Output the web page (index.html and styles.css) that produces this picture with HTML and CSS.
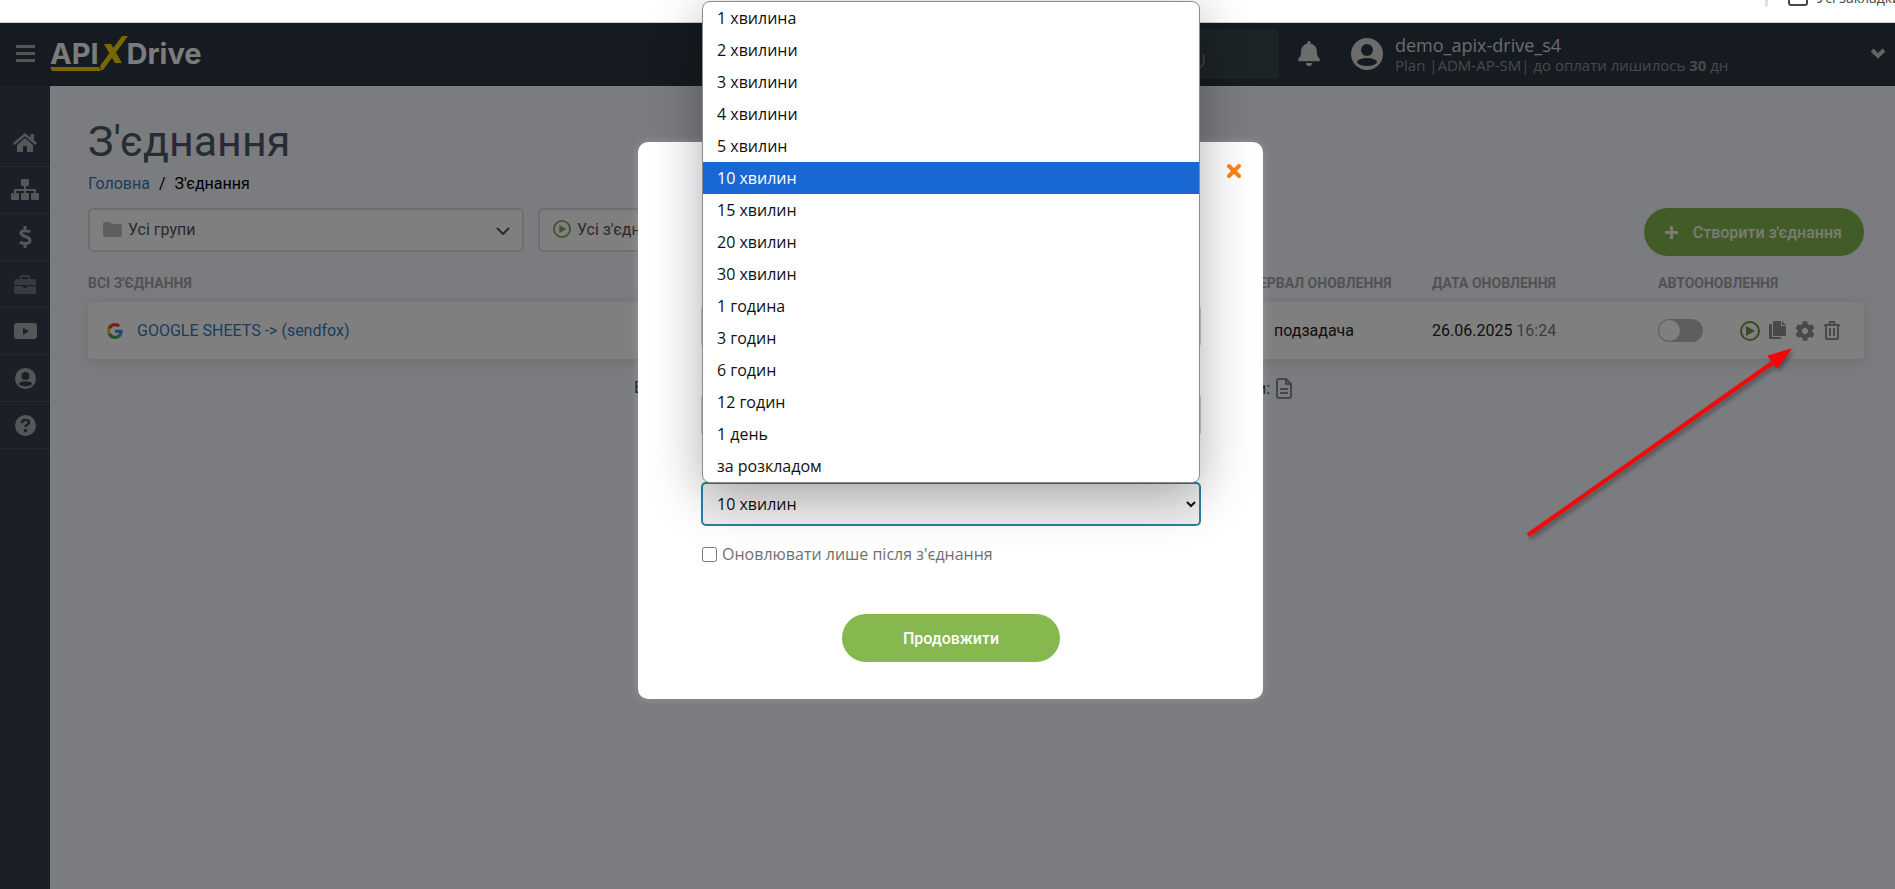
FILE: index.html
```
<!DOCTYPE html>
<html lang="uk">
<head>
    <meta charset="UTF-8">
    <meta name="viewport" content="width=device-width, initial-scale=1.0">
    <title>З'єднання - ApiX-Drive</title>
    <link rel="stylesheet" href="styles.css">
</head>
<body>
    <div class="bookmarks">
        <span class="bookmarks-divider"></span>
        <a href="#" class="bookmarks-link">
            <svg width="20" height="18" viewBox="0 0 20 18"><rect x="1" y="1" width="18" height="16" rx="2" fill="none" stroke="#474747" stroke-width="2"/></svg>
            <span>Усі закладки</span>
        </a>
    </div>

    <div class="app">
        <header class="header">
            <button class="menu-btn" aria-label="Меню">
                <svg width="19" height="17" viewBox="0 0 19 17" fill="currentColor"><rect width="19" height="3"/><rect y="7" width="19" height="3"/><rect y="14" width="19" height="3"/></svg>
            </button>
            <a href="#" class="logo">
                <span class="logo-api">API</span>
                <svg class="logo-mark" width="80" height="38" viewBox="0 0 80 38" fill="#f5cf00"><path d="M1 32h49l2 4H3z"/><path d="M55 9h7l11 19h-7z"/><path d="M73 1h6L54 35h-2l-1-4z"/></svg>
                <span class="logo-drive">Drive</span>
            </a>
            <div class="balance"><i>(15%)</i></div>
            <button class="bell" aria-label="Сповіщення">
                <svg width="22" height="25" viewBox="0 0 448 512" preserveAspectRatio="none" fill="currentColor"><path d="M224 512c35.320 0 63.970-28.650 63.970-64H160.030c0 35.350 28.650 64 63.970 64zm215.390-149.710c-19.320-20.760-55.470-51.990-55.470-154.290 0-77.700-54.480-139.900-127.940-155.160V32c0-17.670-14.320-32-31.980-32s-31.980 14.330-31.980 32v20.840C118.560 68.100 64.080 130.300 64.080 208c0 102.300-36.150 133.530-55.470 154.290-6 6.450-8.660 14.160-8.610 21.710.11 16.400 12.980 32 32.100 32h383.800c19.120 0 32-15.600 32.100-32 .05-7.550-2.610-15.270-8.610-21.710z"/></svg>
            </button>
            <div class="user">
                <svg class="user-avatar" width="32" height="32" viewBox="0 0 32 32"><circle cx="16" cy="16" r="16" fill="currentColor"/><circle cx="16" cy="12" r="6" fill="#2d3642"/><ellipse cx="16" cy="24" rx="10" ry="4" fill="#2d3642"/></svg>
                <div class="user-info">
                    <div class="user-name">demo_apix-drive_s4</div>
                    <div class="user-plan">Plan |ADM-AP-SM| до оплати лишилось <b>30</b> дн</div>
                </div>
            </div>
            <button class="user-toggle" aria-label="Профіль">
                <svg width="16" height="11" viewBox="0 0 16 11"><path d="M2 2l6 6 6-6" fill="none" stroke="currentColor" stroke-width="4"/></svg>
            </button>
        </header>

        <div class="body">
            <nav class="sidebar">
                <a href="#" aria-label="Головна">
                    <svg width="24" height="20" viewBox="0 0 24 20" fill="currentColor"><path d="M12 0L0 10l1.500 2L12 3.200 22.500 12l1.500-2-3-2.500V1h-3.500v3.500z"/><path d="M12 5l-8 7v7h6v-6h4v6h6v-7z"/></svg>
                </a>
                <a href="#" aria-label="З'єднання">
                    <svg width="28" height="22" viewBox="0 0 28 22" fill="currentColor"><rect x="10" y="0" width="8" height="7" rx="1"/><path d="M13 7h2v3h10v4h-2v-2h-8v2h-2v-2H5v2H3v-4h10z"/><rect x="0" y="14" width="8" height="7" rx="1"/><rect x="10" y="14" width="8" height="7" rx="1"/><rect x="20" y="14" width="8" height="7" rx="1"/></svg>
                </a>
                <a href="#" aria-label="Оплата">
                    <svg width="14" height="22" viewBox="0 0 14 22" fill="none" stroke="currentColor" stroke-width="3"><path d="M12 6C10 4.500 3 3.500 3 7c0 4 9 3 9 7.500 0 4-7.500 3.500-10 1.500M7 0v4M7 18v4"/></svg>
                </a>
                <a href="#" class="dimmed" aria-label="Бізнес">
                    <svg width="22" height="19" viewBox="0 0 22 19" fill="currentColor"><path fill-rule="evenodd" d="M6 4V2q0-2 2-2h6q2 0 2 2v2h4q2 0 2 2v4H0V6q0-2 2-2zM8 4h6V2H8z"/><path d="M0 11h9v2h4v-2h9v6q0 2-2 2H2q-2 0-2-2z"/></svg>
                </a>
                <a href="#" aria-label="Відео">
                    <svg width="23" height="16" viewBox="0 0 23 16" fill="currentColor"><path fill-rule="evenodd" d="M3 0h17q3 0 3 3v10q0 3-3 3H3q-3 0-3-3V3q0-3 3-3zM9 5v7l6-4z"/></svg>
                </a>
                <a href="#" aria-label="Профіль">
                    <svg width="21" height="21" viewBox="0 0 32 32"><circle cx="16" cy="16" r="16" fill="currentColor"/><circle cx="16" cy="12" r="6" fill="#374050"/><ellipse cx="16" cy="24" rx="10" ry="4" fill="#374050"/></svg>
                </a>
                <a href="#" aria-label="Допомога">
                    <svg width="21" height="21" viewBox="0 0 21 21"><circle cx="10.500" cy="10.500" r="10.500" fill="currentColor"/><path d="M7 8q0-3 3.500-3T14 7.500c0 2.500-3.500 2-3.500 4.500" fill="none" stroke="#374050" stroke-width="2.500"/><circle cx="10.500" cy="15.500" r="1.800" fill="#374050"/></svg>
                </a>
            </nav>

            <main class="content">
                <h1>З'єднання</h1>
                <div class="breadcrumbs"><a href="#">Головна</a><span>/</span><span>З'єднання</span></div>

                <div class="toolbar">
                    <button class="filter">
                        <svg width="19" height="15" viewBox="0 0 19 15" fill="#bcbcbc"><path d="M0 2q0-2 2-2h5l2 2h8q2 0 2 2v9q0 2-2 2H2q-2 0-2-2z"/></svg>
                        <span>Усі групи</span>
                        <svg class="filter-arrow" width="14" height="8" viewBox="0 0 14 8"><path d="M1 1l6 6 6-6" fill="none" stroke="#555" stroke-width="2"/></svg>
                    </button>
                    <button class="filter">
                        <svg width="18" height="18" viewBox="0 0 20 20"><circle cx="10" cy="10" r="9" fill="none" stroke="#87a758" stroke-width="2"/><path d="M7 5.500v9l8-4.500z" fill="#87a758"/></svg>
                        <span>Усі з'єднання</span>
                        <svg class="filter-arrow" width="14" height="8" viewBox="0 0 14 8"><path d="M1 1l6 6 6-6" fill="none" stroke="#555" stroke-width="2"/></svg>
                    </button>
                    <button class="create-btn">
                        <svg width="13" height="13" viewBox="0 0 13 13" fill="currentColor"><path d="M5 0h3v5h5v3H8v5H5V8H0V5h5z"/></svg>
                        <span>Створити з'єднання</span>
                    </button>
                </div>

                <table class="connections">
                    <thead>
                        <tr>
                            <th>ВСІ З'ЄДНАННЯ</th>
                            <th class="col-interval">ІНТЕРВАЛ ОНОВЛЕННЯ</th>
                            <th class="col-date">ДАТА ОНОВЛЕННЯ</th>
                            <th class="col-auto">АВТООНОВЛЕННЯ</th>
                            <th class="col-actions"></th>
                        </tr>
                    </thead>
                    <tbody>
                        <tr>
                            <td>
                                <div class="connection">
                                    <svg width="16" height="16" viewBox="0 0 48 48"><path fill="#ea4335" d="M24 9.500c3.500 0 6.700 1.200 9.200 3.600l6.900-6.900C35.900 2.400 30.500 0 24 0 14.600 0 6.500 5.400 2.600 13.200l8 6.200C12.400 13.700 17.700 9.500 24 9.500z"/><path fill="#4285f4" d="M47 24.600c0-1.600-.2-3.100-.4-4.600H24v9h12.900c-.6 3-2.200 5.500-4.700 7.200l7.700 6C44.400 38 47 32 47 24.600z"/><path fill="#fbbc05" d="M10.500 28.600A14.500 14.500 0 0 1 10.500 19.400l-8-6.200a24 24 0 0 0 0 21.600z"/><path fill="#34a853" d="M24 48c6.500 0 11.900-2.100 15.900-5.800l-7.700-6c-2.200 1.400-4.900 2.300-8.200 2.300-6.300 0-11.600-4.200-13.500-9.900l-8 6.200C6.500 42.600 14.600 48 24 48z"/></svg>
                                    <a href="#">GOOGLE SHEETS -&gt; (sendfox)</a>
                                </div>
                            </td>
                            <td class="col-interval">подзадача</td>
                            <td class="col-date">26.06.2025 <span class="time">16:24</span></td>
                            <td class="col-auto"><input type="checkbox" class="switch" aria-label="Автооновлення"></td>
                            <td class="col-actions">
                                <div class="actions">
                                    <button aria-label="Запустити"><svg width="20" height="20" viewBox="0 0 20 20"><circle cx="10" cy="10" r="9" fill="none" stroke="#6f9838" stroke-width="2"/><path d="M6 5v10l9-5z" fill="#6f9838"/></svg></button>
                                    <button aria-label="Копіювати"><svg width="17" height="19" viewBox="0 0 17 19" fill="currentColor"><path d="M5 0h7v5h5v9q0 1-1 1H5q-1 0-1-1V1q0-1 1-1z"/><path d="M13 0l4 4h-4z"/><path d="M0 4q0-1 1-1h2v12q0 1 1 1h8v1q0 1-1 1H1q-1 0-1-1z"/></svg></button>
                                    <button aria-label="Налаштування"><svg width="20" height="20" viewBox="0 0 512 512" fill="currentColor"><path d="M487.400 315.700l-42.600-24.600c4.300-23.200 4.300-47 0-70.200l42.600-24.600c4.900-2.800 7.100-8.600 5.500-14-11.100-35.600-30-67.800-54.700-94.600-3.800-4.100-10-5.100-14.800-2.300L380.800 110c-17.900-15.400-38.500-27.300-60.800-35.100V25.800c0-5.600-3.900-10.500-9.400-11.700-36.700-8.200-74.300-7.800-109.200 0-5.500 1.200-9.400 6.100-9.400 11.700V75c-22.200 7.900-42.800 19.800-60.800 35.100L88.700 85.500c-4.900-2.800-11-1.900-14.800 2.300-24.700 26.700-43.600 58.900-54.700 94.600-1.700 5.400.6 11.200 5.500 14L67.300 221c-4.300 23.200-4.300 47 0 70.200l-42.600 24.600c-4.900 2.800-7.100 8.600-5.500 14 11.100 35.600 30 67.800 54.700 94.600 3.800 4.100 10 5.100 14.800 2.300l42.600-24.600c17.900 15.400 38.500 27.300 60.800 35.100v49.200c0 5.600 3.900 10.500 9.400 11.700 36.700 8.200 74.300 7.800 109.200 0 5.500-1.200 9.400-6.100 9.400-11.700v-49.200c22.200-7.900 42.800-19.800 60.800-35.100l42.600 24.600c4.900 2.800 11 1.900 14.800-2.300 24.700-26.700 43.600-58.900 54.700-94.600 1.500-5.500-.7-11.300-5.600-14.100zM256 336c-44.100 0-80-35.900-80-80s35.900-80 80-80 80 35.900 80 80-35.900 80-80 80z"/></svg></button>
                                    <button aria-label="Видалити"><svg width="16" height="19" viewBox="0 0 16 19" fill="none" stroke="currentColor" stroke-width="2"><path d="M0 4h16M5 4l1-3h4l1 3M2 4v13q0 1 1 1h10q1 0 1-1V4"/><path d="M6 7v8M10 7v8"/></svg></button>
                                </div>
                            </td>
                        </tr>
                    </tbody>
                </table>

                <div class="summary">
                    <span>Всього з'єднань: 1</span>
                    <span class="logs">Логи:
                        <svg width="16" height="21" viewBox="0 0 16 21" fill="none" stroke="#8c8c8c" stroke-width="2"><path d="M3 1h7l5 5v12q0 2-2 2H3q-2 0-2-2V3q0-2 2-2zM10 1v5h5M4 11h8M4 15h8"/></svg>
                    </span>
                </div>
            </main>
        </div>

        <div class="overlay">
            <form class="modal">
                <button type="button" class="modal-close" aria-label="Закрити">
                    <svg width="18" height="18" viewBox="0 0 18 18"><path d="M4 4l10 10M14 4L4 14" stroke="#f9850d" stroke-width="4" stroke-linecap="round"/></svg>
                </button>
                <h2>Налаштування</h2>
                <div class="field">
                    <label for="name">Назва</label>
                    <input type="text" id="name">
                </div>
                <div class="field">
                    <label for="group">Група</label>
                    <input type="text" id="group">
                </div>
                <div class="field">
                    <label for="interval">Інтервал</label>
                    <select id="interval">
                        <option>10 хвилин</option>
                    </select>
                    <ul class="dropdown" role="listbox">
                        <li role="option">1 хвилина</li>
                        <li role="option">2 хвилини</li>
                        <li role="option">3 хвилини</li>
                        <li role="option">4 хвилини</li>
                        <li role="option">5 хвилин</li>
                        <li role="option" class="selected" aria-selected="true">10 хвилин</li>
                        <li role="option">15 хвилин</li>
                        <li role="option">20 хвилин</li>
                        <li role="option">30 хвилин</li>
                        <li role="option">1 година</li>
                        <li role="option">3 годин</li>
                        <li role="option">6 годин</li>
                        <li role="option">12 годин</li>
                        <li role="option">1 день</li>
                        <li role="option">за розкладом</li>
                    </ul>
                </div>
                <div class="check">
                    <input type="checkbox" id="after">
                    <label for="after">Оновлювати лише після з'єднання</label>
                </div>
                <button type="button" class="submit-btn">Продовжити</button>
            </form>
        </div>
    </div>

    <!-- pointer to the settings icon -->
    <svg class="pointer" width="270" height="195" viewBox="0 0 270 195"><path d="M4 189L248 17" stroke="#f40808" stroke-width="4"/><path d="M267 3l-23 7 9 12z" fill="#f00" stroke="#f00"/></svg>
</body>
</html>
```
FILE: styles.css
```
* {
    box-sizing: border-box;
}

body {
    margin: 0;
    min-height: 100vh;
    display: flex;
    flex-direction: column;
    position: relative;
    overflow: hidden;
    font-family: Roboto, Arial, sans-serif;
    font-size: 16px;
    background: #fff;
}

button {
    padding: 0;
    border: none;
    background: none;
    color: inherit;
    font: inherit;
    cursor: pointer;
}

svg {
    display: block;
    flex-shrink: 0;
}

a {
    color: #337ab7;
    text-decoration: none;
}

/* browser bar */
.bookmarks {
    height: 23px;
    display: flex;
    justify-content: flex-end;
    gap: 20px;
    overflow: hidden;
    border-bottom: 1px solid #ccc;
}

.bookmarks-divider {
    width: 3px;
    height: 7px;
    background: #d3e3fd;
    border-radius: 0 0 2px 2px;
}

.bookmarks-link {
    display: flex;
    align-items: center;
    gap: 9px;
    height: 20px;
    margin: -13px -6px 0 0;
    color: #474747;
    font: 14px "Open Sans", sans-serif;
    white-space: nowrap;
}

.app {
    flex: 1;
    display: flex;
    flex-direction: column;
    position: relative;
}

/* header */
.header {
    height: 63px;
    display: flex;
    align-items: center;
    padding: 0 9px 2px 16px;
    background: #2d3642;
    color: #d8d8d8;
    font-family: "Open Sans", sans-serif;
}

.menu-btn {
    color: #a8abb0;
}

.logo {
    display: flex;
    align-items: center;
    margin-left: 15px;
    color: #f8f8f8;
    font: 700 29px/38px Inter, sans-serif;
}

.logo-mark {
    margin: 0 -2px 0 -50px;
}

.balance {
    width: 560px;
    height: 50px;
    margin: 0 19px 0 auto;
    padding: 20px 74px 0 0;
    border-radius: 6px;
    background: #3a494c;
    color: #8c9494;
    text-align: right;
}

.user {
    width: 519px;
    display: flex;
    align-items: center;
    gap: 12px;
    margin-left: 31px;
}

.user-avatar {
    color: #d8d8d8;
}

.user-info {
    padding-top: 3px;
}

.user-name {
    font-size: 18px;
    line-height: 20px;
}

.user-plan {
    font-size: 15px;
    line-height: 20px;
    color: #909396;
}

.user-toggle {
    color: #c8c8c8;
}

.body {
    flex: 1;
    display: flex;
}

/* sidebar */
.sidebar {
    width: 50px;
    padding-top: 34px;
    background: #374050;
}

.sidebar a {
    height: 47px;
    display: flex;
    align-items: center;
    justify-content: center;
    border-bottom: 1px solid #4b5463;
    color: #a9acb1;
}

.sidebar .dimmed {
    color: #6f757e;
}

/* content */
.content {
    flex: 1;
    padding: 29px 31px 0 38px;
    background: #f7f8fe;
}

h1 {
    margin: 0;
    color: #4b5a66;
    font-size: 43px;
    font-weight: 400;
    line-height: 52px;
}

.breadcrumbs {
    display: flex;
    gap: 9px;
    margin-top: 7px;
    line-height: 20px;
}

.toolbar {
    display: flex;
    gap: 14px;
    margin-top: 14px;
}

.filter {
    width: 436px;
    height: 44px;
    display: flex;
    align-items: center;
    gap: 6px;
    padding: 0 12px 2px 13px;
    border: 2px solid #dcdcdc;
    border-radius: 5px;
    background: #fff;
    color: #555;
}

.filter-arrow {
    margin: 4px 0 0 auto;
}

.create-btn {
    height: 48px;
    display: flex;
    align-items: center;
    gap: 15px;
    margin-left: auto;
    padding: 0 22px 0 21px;
    border-radius: 24px;
    background: #84b84f;
    color: #f4f6e8;
    font-weight: 500;
}

.connections {
    width: 100%;
    margin-top: 10px;
    border-collapse: separate;
    border-spacing: 0;
    table-layout: fixed;
}

.connections th {
    height: 36px;
    padding: 0 0 2px;
    color: #a4a4a4;
    font-size: 14px;
    text-align: left;
}

.connections td {
    height: 57px;
    padding: 0;
    background: #fff;
    color: #222;
}

.connections tbody tr {
    border-radius: 5px;
    box-shadow: 0 2px 14px rgba(60, 60, 80, 0.15);
}

.connections td:first-child {
    border-radius: 5px 0 0 5px;
}

.connections td:last-child {
    border-radius: 0 5px 5px 0;
}

.connections .col-interval {
    width: 236px;
    text-align: center;
}

.col-date {
    width: 226px;
}

.col-auto {
    width: 82px;
    white-space: nowrap;
}

.col-actions {
    width: 124px;
}

.time {
    color: #7a7a7a;
}

.connection {
    display: flex;
    align-items: center;
    gap: 14px;
    padding-left: 19px;
}

.switch {
    appearance: none;
    display: block;
    width: 45px;
    height: 23px;
    margin: 0;
    padding: 1px;
    border-radius: 12px;
    background: #bcbcbc;
}

.switch::before {
    content: "";
    display: block;
    width: 21px;
    height: 21px;
    border-radius: 50%;
    background: #fff;
}

.actions {
    display: flex;
    align-items: center;
    gap: 9px;
    color: #929292;
}

.summary {
    width: 684px;
    display: flex;
    justify-content: space-between;
    margin: 19px auto 0;
    padding-right: 26px;
    color: #333;
}

.logs {
    display: flex;
    align-items: center;
    gap: 6px;
}

/* modal */
.overlay {
    position: absolute;
    inset: 0;
    display: flex;
    justify-content: center;
    align-items: flex-start;
    padding: 119px 0 0 6px;
    background: rgba(0, 0, 0, 0.5);
    font-family: "Open Sans", sans-serif;
}

.modal {
    position: relative;
    width: 100%;
    max-width: 625px;
    padding: 50px 62px 37px 63px;
    border-radius: 10px;
    background: #fff;
    box-shadow: 0 0 10px rgba(255, 255, 255, 0.2);
}

.modal-close {
    position: absolute;
    top: 20px;
    right: 20px;
}

.modal h2 {
    margin: 0;
    font-size: 24px;
    line-height: 32px;
    text-align: center;
}

.field {
    position: relative;
    margin-top: 21px;
}

.modal h2 + .field {
    margin-top: 56px;
}

.field label {
    display: block;
    line-height: 24px;
    color: #707070;
}

.field input,
.field select {
    display: block;
    width: 100%;
    height: 44px;
    padding: 0 12px;
    border: 2px solid #ccc;
    border-radius: 5px;
    background: #fff;
    color: #111;
    font: inherit;
}

.field select {
    padding: 0 2px 0 10px;
    border-color: #2a80a4;
    background: #efefef;
}

.dropdown {
    position: absolute;
    bottom: 43px;
    left: 1px;
    right: 1px;
    margin: 0;
    padding: 0;
    list-style: none;
    border: 1px solid #8c8c8c;
    border-radius: 8px;
    background: #fff;
    box-shadow: 0 12px 52px rgba(0, 0, 0, 0.32);
}

.dropdown li {
    padding-left: 14px;
    line-height: 32px;
    color: #111;
}

.dropdown .selected {
    background: #1967d2;
    color: #fff;
}

.check {
    display: flex;
    align-items: center;
    gap: 5px;
    margin-top: 16px;
    color: #707070;
    line-height: 24px;
}

.check input {
    width: 15px;
    height: 15px;
    margin: 0 0 0 1px;
}

.submit-btn {
    display: block;
    width: 218px;
    height: 48px;
    margin: 48px auto 0;
    border-radius: 24px;
    background: #86b84f;
    color: #fff;
    font: 500 16px Roboto, sans-serif;
}

.pointer {
    position: absolute;
    top: 346px;
    right: 101px;
    pointer-events: none;
    filter: drop-shadow(2px 3px 2px rgba(0, 0, 0, 0.35));
}
```
